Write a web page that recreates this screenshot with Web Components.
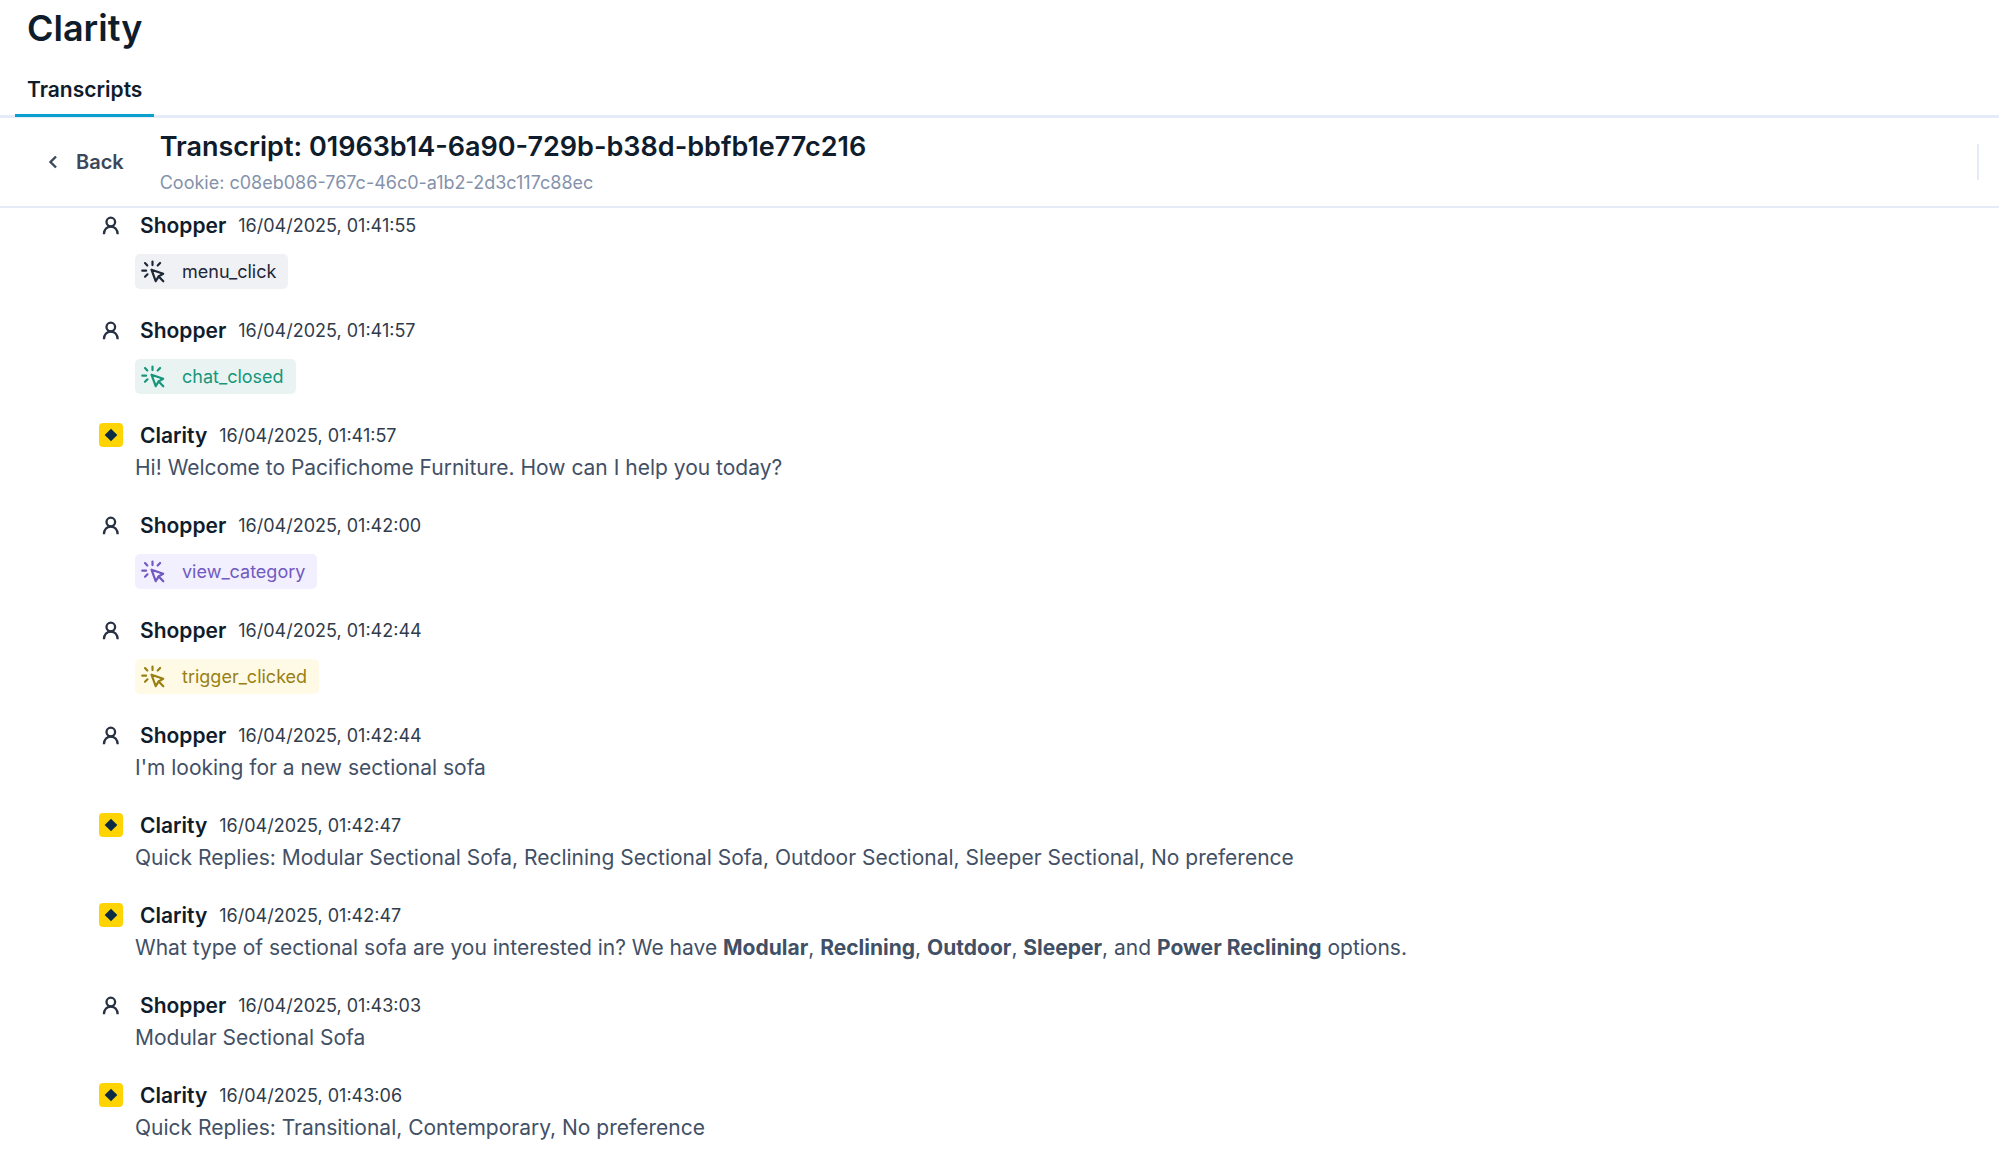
<!DOCTYPE html>
<html lang="en">
<head>
<meta charset="utf-8">
<meta name="viewport" content="width=device-width, initial-scale=1">
<title>Clarity</title>
<style>
body {
    margin: 0;
    background: #fff;
    color: #0f1c2b;
    font-family: Inter, "Liberation Sans", sans-serif;
}
</style>
</head>
<body>
<clarity-page>
    <page-tabs slot="tabs" label="Transcripts"></page-tabs>
    <transcript-header slot="header" session="01963b14-6a90-729b-b38d-bbfb1e77c216" cookie="c08eb086-767c-46c0-a1b2-2d3c117c88ec"></transcript-header>

    <chat-message author="Shopper" time="16/04/2025, 01:41:55"><event-chip slot="event">menu_click</event-chip></chat-message>
    <chat-message author="Shopper" time="16/04/2025, 01:41:57"><event-chip slot="event" tone="green">chat_closed</event-chip></chat-message>
    <chat-message author="Clarity" time="16/04/2025, 01:41:57"><span>Hi! Welcome to Pacifichome Furniture. How can I help you today?</span></chat-message>
    <chat-message author="Shopper" time="16/04/2025, 01:42:00"><event-chip slot="event" tone="purple">view_category</event-chip></chat-message>
    <chat-message author="Shopper" time="16/04/2025, 01:42:44"><event-chip slot="event" tone="yellow">trigger_clicked</event-chip></chat-message>
    <chat-message author="Shopper" time="16/04/2025, 01:42:44"><span>I'm looking for a new sectional sofa</span></chat-message>
    <chat-message author="Clarity" time="16/04/2025, 01:42:47"><span>Quick Replies: Modular Sectional Sofa, Reclining Sectional Sofa, Outdoor Sectional, Sleeper Sectional, No preference</span></chat-message>
    <chat-message author="Clarity" time="16/04/2025, 01:42:47"><span>What type of sectional sofa are you interested in? We have <b>Modular</b>, <b>Reclining</b>, <b>Outdoor</b>, <b>Sleeper</b>, and <b>Power Reclining</b> options.</span></chat-message>
    <chat-message author="Shopper" time="16/04/2025, 01:43:03"><span>Modular Sectional Sofa</span></chat-message>
    <chat-message author="Clarity" time="16/04/2025, 01:43:06"><span>Quick Replies: Transitional, Contemporary, No preference</span></chat-message>
</clarity-page>

<template id="clarity-page">
<style>
:host {
    display: block;
}
h1 {
    margin: 0;
    padding: 6px 27px 0;
    font-size: 36px;
    line-height: 44px;
    font-weight: 600;
}
.messages {
    display: flex;
    flex-direction: column;
    gap: 24px;
    padding: 0 27px 14px 99px;
}
</style>
<h1>Clarity</h1>
<slot name="tabs"></slot>
<main>
    <slot name="header"></slot>
    <div class="messages"><slot></slot></div>
</main>
</template>

<template id="page-tabs">
<style>
:host {
    display: block;
    padding: 0 15px;
    box-shadow: inset 0 -3px #e5ebf7;
}
nav {
    display: flex;
}
a {
    padding: 20px 12px 4px;
    border-bottom: 3px solid #0b9fd0;
    margin-bottom: 1px;
    color: inherit;
    font-size: 21px;
    line-height: 40px;
    font-weight: 600;
    text-decoration: none;
}
</style>
<nav><a href="#transcripts"></a></nav>
</template>

<template id="transcript-header">
<style>
:host {
    display: flex;
    align-items: center;
    height: 90px;
    padding: 0 20px 0 48px;
    border-bottom: 2px solid #e5ebf7;
    box-sizing: border-box;
}
button {
    display: flex;
    align-items: center;
    gap: 18px;
    margin: 0 36px 0 0;
    padding: 0;
    border: 0;
    background: none;
    color: #3d475c;
    font: 600 20px/28px Inter, "Liberation Sans", sans-serif;
    cursor: pointer;
}
.titles {
    flex: 1;
    padding-top: 4px;
}
h2, p {
    margin: 0;
}
h2 {
    font-size: 27px;
    line-height: 36px;
    font-weight: 600;
}
p {
    color: #8592ab;
    font-size: 18px;
    line-height: 35px;
}
.divider {
    width: 2px;
    height: 36px;
    background: #e5ebf7;
}
</style>
<button type="button">
    <svg width="10" height="14" viewBox="0 0 10 14" fill="none" stroke="currentColor" stroke-width="2.400" aria-hidden="true"><path d="M8 1.500 2.500 7 8 12.500"/></svg>
    Back
</button>
<div class="titles">
    <h2></h2>
    <p></p>
</div>
<div class="divider"></div>
</template>

<template id="chat-message">
<style>
:host {
    display: block;
}
header {
    display: flex;
    align-items: center;
    height: 34px;
}
svg {
    width: 24px;
    height: 24px;
    margin-right: 17px;
}
.bot {
    display: none;
}
:host([author="Clarity"]) .bot {
    display: block;
}
:host([author="Clarity"]) .person {
    display: none;
}
.author {
    margin-right: 12px;
    font-size: 21px;
    font-weight: 600;
}
time {
    color: #303b4b;
    font-size: 18px;
}
.body {
    padding-left: 36px;
    color: #425066;
    font-size: 21px;
    line-height: 32px;
}
::slotted(event-chip) {
    margin: 12px 0 0 36px;
}
</style>
<header>
    <svg class="person" viewBox="0 0 24 24" fill="none" stroke="#273142" stroke-width="2.300" aria-hidden="true">
        <circle cx="11.800" cy="9" r="4.300"/>
        <path d="M4.900 21.200C5.100 16.600 8 13.500 11.800 13.500s6.700 3.100 6.900 7.700"/>
    </svg>
    <svg class="bot" viewBox="0 0 24 24" aria-hidden="true">
        <rect width="24" height="24" rx="4" fill="#ffd400"/>
        <path d="M12 5.700 18.300 12 12 18.300 5.700 12Z" fill="#092b43"/>
    </svg>
    <span class="author"></span>
    <time></time>
</header>
<div class="body"><slot></slot></div>
<slot name="event"></slot>
</template>

<template id="event-chip">
<style>
:host {
    --fg: #1c2737;
    --bg: #f0f1f4;
    display: flex;
    align-items: center;
    width: fit-content;
    height: 35px;
    gap: 17px;
    padding: 0 12px 0 6px;
    border-radius: 5px;
    box-sizing: border-box;
    background: var(--bg);
    color: var(--fg);
    font-size: 18px;
}
:host([tone="green"]) {
    --fg: #16967a;
    --bg: #e9f4f2;
}
:host([tone="purple"]) {
    --fg: #7059c1;
    --bg: #f2effe;
}
:host([tone="yellow"]) {
    --fg: #998013;
    --bg: #fffae6;
}
</style>
<svg width="24" height="24" viewBox="0 0 24 24" fill="none" stroke="currentColor" stroke-width="2.200" stroke-linecap="round" stroke-linejoin="round" aria-hidden="true">
    <path d="M11.500 1.500v3.600M4 3.100 6.300 5.500M1.300 10.700h3.800M4 16.700l2.500-2.400M16.700 5.500l2.400-2.500"/>
    <path d="M10.500 9.700 22.200 13.700 17.700 16.400 14.700 21.200Z"/>
    <path d="M17.700 16.400 22.300 21.300"/>
</svg>
<slot></slot>
</template>

<script>
const attach = (element, id) => {
    const root = element.attachShadow({ mode: 'open' });
    root.appendChild(document.getElementById(id).content.cloneNode(true));
    return root;
};

class ClarityPage extends HTMLElement {
    constructor() {
        super();
        attach(this, 'clarity-page');
    }
}

class PageTabs extends HTMLElement {
    constructor() {
        super();
        const root = attach(this, 'page-tabs');
        root.querySelector('a').textContent = this.getAttribute('label');
    }
}

class TranscriptHeader extends HTMLElement {
    constructor() {
        super();
        const root = attach(this, 'transcript-header');
        root.querySelector('h2').textContent = 'Transcript: ' + this.getAttribute('session');
        root.querySelector('p').textContent = 'Cookie: ' + this.getAttribute('cookie');
    }
}

class ChatMessage extends HTMLElement {
    constructor() {
        super();
        const root = attach(this, 'chat-message');
        root.querySelector('.author').textContent = this.getAttribute('author');
        root.querySelector('time').textContent = this.getAttribute('time');
        // events have no message text
        if (this.querySelector('event-chip')) {
            root.querySelector('.body').remove();
        }
    }
}

class EventChip extends HTMLElement {
    constructor() {
        super();
        attach(this, 'event-chip');
    }
}

customElements.define('clarity-page', ClarityPage);
customElements.define('page-tabs', PageTabs);
customElements.define('transcript-header', TranscriptHeader);
customElements.define('chat-message', ChatMessage);
customElements.define('event-chip', EventChip);
</script>
</body>
</html>
